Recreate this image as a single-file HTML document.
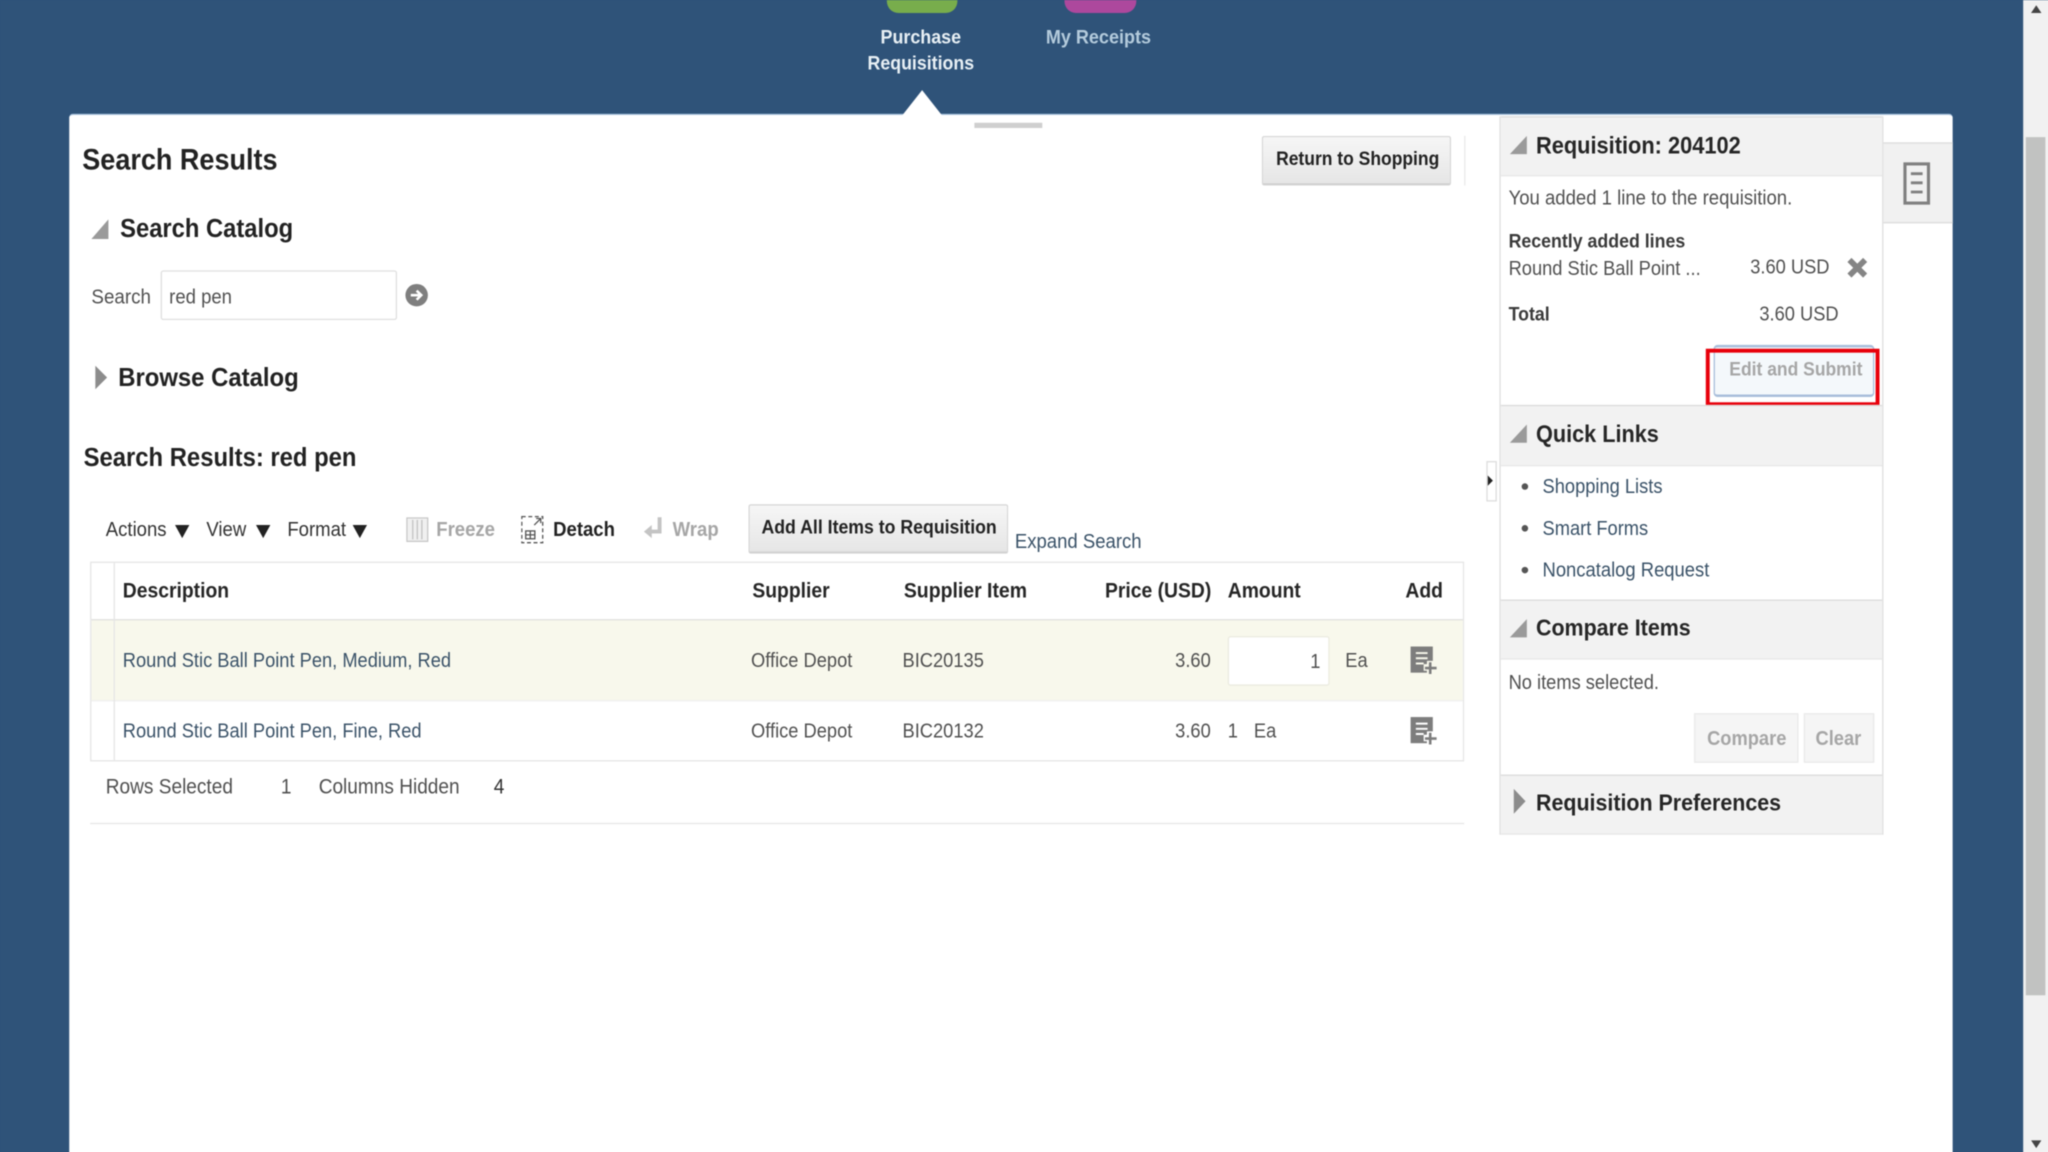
<!DOCTYPE html>
<html><head><meta charset="utf-8"><title>Search Results</title>
<style>
html,body{margin:0;padding:0;width:2048px;height:1152px;overflow:hidden;background:#2f5379}
#c{position:absolute;left:0;top:0;width:2048px;height:1152px;overflow:hidden}
#w{position:absolute;left:0;top:0;width:1600px;height:910px;transform:scale(1.30612);transform-origin:0 0;overflow:hidden;font-family:"Liberation Sans",Arial,sans-serif;font-size:14.2px;color:#505050;background:#2f5379;filter:blur(.4px)}
#w div,#w svg{position:absolute}
.t{white-space:nowrap;line-height:20px;height:20px;transform:scaleY(1.1)}
.b{font-weight:bold;color:#2b2b2b}
.h{font-weight:bold;color:#222;font-size:18.2px}
.s{font-weight:bold;color:#262626;font-size:16.4px}
.th{font-weight:bold;color:#262626;font-size:14.8px}
.l{color:#3a5268}
.d{font-weight:bold;color:#a6a6a6}
.btn{box-sizing:border-box;background:linear-gradient(#f6f6f6,#e6e6e6);border:1px solid #d6d6d6;border-radius:2px;border-bottom:2px solid #d2d2d2}
.hd{box-sizing:border-box;left:1149px;width:292px;background:#f2f2f2;border-top:1px solid #dcdcdc;border-bottom:1px solid #e8e8e8}
.r{text-align:right}
</style></head><body>
<div id="c">
<div id="w">
<!-- top nav -->
<div style="left:679px;top:-8px;width:54px;height:18px;background:#78ad4c;border-radius:0 0 9px 9px"></div>
<div style="left:815px;top:-8px;width:55px;height:18px;background:#ad489d;border-radius:0 0 9px 9px"></div>
<div class="t" style="left:625px;width:160px;top:18.5px;text-align:center;font-weight:bold;color:#e8f0f5;font-size:13.7px">Purchase</div>
<div class="t" style="left:625px;width:160px;top:38.5px;text-align:center;font-weight:bold;color:#e8f0f5;font-size:13.6px">Requisitions</div>
<div class="t" style="left:761px;width:160px;top:18.5px;text-align:center;font-weight:bold;color:#b4cbdc;font-size:13.8px">My Receipts</div>
<!-- main panel -->
<div style="left:53px;top:87px;width:1441.5px;height:830px;background:#fff;border-radius:3px 3px 0 0;border-top:1px solid #a9c3dd;box-sizing:border-box"></div>
<svg style="left:690px;top:68px" width="32" height="21"><polygon points="16,1 31,20 1,20" fill="#fff"/></svg>
<div style="left:746px;top:94px;width:52px;height:4px;background:#cfcfcf"></div>

<div class="t" style="left:63px;top:112.5px;font-size:20.7px;font-weight:bold;color:#222">Search Results</div>
<div class="btn" style="left:966px;top:104px;width:145px;height:38px"></div>
<div class="t b" style="left:977px;top:112px;font-size:13.4px;color:#222">Return to Shopping</div>
<div style="left:1121px;top:104px;width:1px;height:38px;background:#eaeaea"></div>

<svg style="left:69px;top:167px" width="15" height="17"><polygon points="14,1 14,16 1,16" fill="#9a9a9a"/></svg>
<div class="t h" style="left:92px;top:165px">Search Catalog</div>
<div class="t" style="left:70px;top:218px;font-size:14.4px">Search</div>
<div style="left:123px;top:207px;width:180.5px;height:38px;box-sizing:border-box;border:1px solid #dfdfdf;border-radius:2px;background:#fff"></div>
<div class="t" style="left:129.5px;top:218px">red pen</div>
<svg style="left:310px;top:217px" width="18" height="18"><circle cx="9" cy="9" r="8.6" fill="#7f7f7f"/><path d="M4.5 9H12M9 5.5L12.5 9L9 12.5" stroke="#fff" stroke-width="2" fill="none"/></svg>

<svg style="left:72px;top:278.5px" width="11" height="20"><polygon points="1,1 10,10 1,19" fill="#8c8c8c"/></svg>
<div class="t h" style="left:90.5px;top:279px;font-size:18.3px">Browse Catalog</div>
<div class="t h" style="left:64px;top:340px;font-size:18.25px">Search Results: red pen</div>

<!-- toolbar -->
<div class="t" style="left:81px;top:396px;color:#333">Actions</div>
<svg style="left:134px;top:402px" width="11" height="10"><polygon points="0,0 11,0 5.5,10" fill="#222"/></svg>
<div class="t" style="left:158px;top:396px;color:#333">View</div>
<svg style="left:196px;top:402px" width="11" height="10"><polygon points="0,0 11,0 5.5,10" fill="#222"/></svg>
<div class="t" style="left:220px;top:396px;color:#333">Format</div>
<svg style="left:270px;top:402px" width="11" height="10"><polygon points="0,0 11,0 5.5,10" fill="#222"/></svg>

<svg style="left:311px;top:396px" width="17" height="19"><rect x=".5" y=".5" width="16" height="18" fill="#f0f0f0" stroke="#c6c6c6"/><path d="M5 2V17M8.5 2V17M12 2V17" stroke="#c2c2c2" fill="none"/></svg>
<div class="t d" style="left:334px;top:396px">Freeze</div>
<svg style="left:399px;top:394.5px" width="18" height="22"><rect x=".5" y=".5" width="16" height="20" fill="none" stroke="#555" stroke-dasharray="3 2"/><path d="M10 7L15 2M11.5 2H15V5.5" stroke="#555" fill="none"/><rect x="3.5" y="11.5" width="7" height="6" fill="none" stroke="#555"/><path d="M7 11.5V17.5M3.5 14.5H10.5" stroke="#555"/></svg>
<div class="t b" style="left:423.5px;top:396px;color:#222">Detach</div>
<svg style="left:492px;top:395px" width="17" height="20"><path d="M13 1V12H6" stroke="#c4c4c4" stroke-width="3" fill="none"/><polygon points="1,12 7,7 7,17" fill="#c4c4c4"/></svg>
<div class="t d" style="left:515px;top:396px">Wrap</div>
<div class="btn" style="left:573px;top:386px;width:199px;height:38px"></div>
<div class="t b" style="left:583px;top:394px;font-size:13.55px;color:#222">Add All Items to Requisition</div>
<div class="t l" style="left:777px;top:405px">Expand Search</div>

<!-- table -->
<div style="left:69px;top:430px;width:1052px;height:153px;box-sizing:border-box;border:1px solid #e6e6e6"></div>
<div style="left:70px;top:474px;width:1050px;height:63px;background:#f8f8ec;border-top:1px solid #e0e0e0;border-bottom:1px solid #f0f0f0;box-sizing:border-box"></div>
<div style="left:87px;top:431px;width:1px;height:151px;background:#e6e6e6"></div>
<div class="t th" style="left:94px;top:442.5px">Description</div>
<div class="t th" style="left:576px;top:442.5px">Supplier</div>
<div class="t th" style="left:692px;top:442.5px;font-size:14.9px">Supplier Item</div>
<div class="t th" style="left:846px;top:442.5px">Price (USD)</div>
<div class="t th" style="left:940px;top:442.5px">Amount</div>
<div class="t th" style="left:1076px;top:442.5px">Add</div>

<div class="t l" style="left:94px;top:495px;font-size:14px">Round Stic Ball Point Pen, Medium, Red</div>
<div class="t" style="left:575px;top:495px;font-size:14px">Office Depot</div>
<div class="t" style="left:691px;top:495px;font-size:14px">BIC20135</div>
<div class="t r" style="left:867px;width:60px;top:495px;font-size:14px">3.60</div>
<div style="left:940px;top:487px;width:78px;height:38px;box-sizing:border-box;background:#fff;border:1px solid #ebebe0;border-radius:2px"></div>
<div class="t r" style="left:950px;width:61px;top:496px;font-size:14px">1</div>
<div class="t" style="left:1030px;top:495px;font-size:14px">Ea</div>
<svg style="left:1079px;top:494px" width="21" height="23"><rect x="1" y="1" width="17" height="20" fill="#7d7d7d"/><path d="M5 6H14M5 10H14M5 14H11" stroke="#f8f8ec" stroke-width="1.5"/><path d="M16 12V22M11 17H21" stroke="#f8f8ec" stroke-width="5"/><path d="M16 13V22M12 17.5H21" stroke="#7d7d7d" stroke-width="2"/></svg>

<div class="t l" style="left:94px;top:549px;font-size:14px">Round Stic Ball Point Pen, Fine, Red</div>
<div class="t" style="left:575px;top:549px;font-size:14px">Office Depot</div>
<div class="t" style="left:691px;top:549px;font-size:14px">BIC20132</div>
<div class="t r" style="left:867px;width:60px;top:549px;font-size:14px">3.60</div>
<div class="t" style="left:940px;top:549px;font-size:14px">1</div>
<div class="t" style="left:960px;top:549px;font-size:14px">Ea</div>
<svg style="left:1079px;top:548px" width="21" height="23"><rect x="1" y="1" width="17" height="20" fill="#7d7d7d"/><path d="M5 6H14M5 10H14M5 14H11" stroke="#fff" stroke-width="1.5"/><path d="M16 12V22M11 17H21" stroke="#fff" stroke-width="5"/><path d="M16 13V22M12 17.5H21" stroke="#7d7d7d" stroke-width="2"/></svg>

<div class="t" style="left:81px;top:593px;font-size:14.6px">Rows Selected</div>
<div class="t" style="left:215px;top:593px;font-size:14.6px">1</div>
<div class="t" style="left:244px;top:593px;font-size:14.6px">Columns Hidden</div>
<div class="t" style="left:378px;top:593px;font-size:14.6px;color:#333">4</div>
<div style="left:69px;top:630px;width:1052px;height:1px;background:#e6e6e6"></div>

<!-- splitter -->
<div style="left:1138px;top:353px;width:8px;height:31px;box-sizing:border-box;border:1px solid #ddd;background:#fff"></div>
<svg style="left:1139px;top:364px" width="5" height="9"><polygon points="0,0 4,4 0,8" fill="#222"/></svg>

<!-- right panel -->
<div style="left:1148px;top:89px;width:293.5px;height:550px;box-sizing:border-box;border:1px solid #dfdfdf;border-top:0;background:#fff"></div>
<div class="hd" style="top:89px;height:46px"></div>
<svg style="left:1155px;top:103px" width="15" height="16"><polygon points="14,1 14,15 1,15" fill="#9a9a9a"/></svg>
<div class="t s" style="left:1176px;top:101.5px;font-size:16.7px">Requisition: 204102</div>
<div class="t" style="left:1155px;top:141.5px">You added 1 line to the requisition.</div>
<div class="t b" style="left:1155px;top:174.5px;font-size:13.6px;color:#3a3a3a">Recently added lines</div>
<div class="t" style="left:1155px;top:195px;font-size:14px">Round Stic Ball Point ...</div>
<div class="t" style="left:1340px;top:194px;font-size:14px">3.60 USD</div>
<svg style="left:1413px;top:196px" width="18" height="18"><path d="M3 3L15 15M15 3L3 15" stroke="#858585" stroke-width="4.4" fill="none"/></svg>
<div class="t b" style="left:1155px;top:230.5px;font-size:13.6px;color:#3a3a3a">Total</div>
<div class="t" style="left:1347px;top:230px;font-size:14px">3.60 USD</div>
<div style="left:1312px;top:264px;width:123px;height:40px;box-sizing:border-box;background:#f4f8fb;border:1px solid #a9bedb;border-width:2px 1px 2px 1px;border-radius:3px"></div>
<div style="left:1306px;top:267px;width:133px;height:44px;box-sizing:border-box;border:3px solid #e8000b"></div>
<div class="t d" style="left:1324px;top:273px;font-size:13.4px">Edit and Submit</div>

<div class="hd" style="top:310px;height:47px"></div>
<svg style="left:1155px;top:324px" width="15" height="16"><polygon points="14,1 14,15 1,15" fill="#9a9a9a"/></svg>
<div class="t s" style="left:1176px;top:322.5px;font-size:16.6px">Quick Links</div>
<div style="left:1165px;top:370px;width:5px;height:5px;border-radius:50%;background:#555"></div>
<div class="t l" style="left:1181px;top:361.5px;font-size:14px">Shopping Lists</div>
<div style="left:1165px;top:402px;width:5px;height:5px;border-radius:50%;background:#555"></div>
<div class="t l" style="left:1181px;top:393.5px;font-size:14px">Smart Forms</div>
<div style="left:1165px;top:434px;width:5px;height:5px;border-radius:50%;background:#555"></div>
<div class="t l" style="left:1181px;top:425.5px;font-size:14.1px">Noncatalog Request</div>

<div class="hd" style="top:459px;height:46px"></div>
<svg style="left:1155px;top:473px" width="15" height="16"><polygon points="14,1 14,15 1,15" fill="#9a9a9a"/></svg>
<div class="t s" style="left:1176px;top:471px">Compare Items</div>
<div class="t" style="left:1155px;top:512px;font-size:14px">No items selected.</div>
<div style="left:1297px;top:546px;width:80px;height:38px;box-sizing:border-box;background:#f5f5f5;border:1px solid #eaeaea"></div>
<div class="t d" style="left:1307px;top:555px;font-size:14px">Compare</div>
<div style="left:1381px;top:546px;width:54px;height:38px;box-sizing:border-box;background:#f5f5f5;border:1px solid #eaeaea"></div>
<div class="t d" style="left:1390px;top:555px;font-size:14px">Clear</div>

<div class="hd" style="top:593px;height:46px"></div>
<svg style="left:1158px;top:603px" width="11" height="21"><polygon points="1,1 10,10.5 1,20" fill="#8c8c8c"/></svg>
<div class="t s" style="left:1176px;top:604.5px">Requisition Preferences</div>

<!-- side tab -->
<div style="left:1441.5px;top:109px;width:53px;height:62px;box-sizing:border-box;background:#f1f1f1;border-top:1px solid #dcdcdc;border-bottom:1px solid #dcdcdc"></div>
<svg style="left:1456.5px;top:124px" width="21" height="33"><rect x="1.5" y="1.5" width="18" height="30" fill="none" stroke="#808080" stroke-width="2.4"/><path d="M6 9H15M6 16H15M6 23H15" stroke="#808080" stroke-width="2.2"/></svg>

<!-- scrollbar -->
<div style="left:1549px;top:0;width:51px;height:910px;background:#f1f1f1"></div>
<div style="left:1550.5px;top:105px;width:15.5px;height:657px;background:#c1c2c1"></div>
<svg style="left:1555px;top:4px" width="8" height="7"><polygon points="4,0 8,6 0,6" fill="#444"/></svg>
<svg style="left:1555px;top:873px" width="8" height="7"><polygon points="0,0 8,0 4,6" fill="#444"/></svg>
</div>
</div>
</body></html>
